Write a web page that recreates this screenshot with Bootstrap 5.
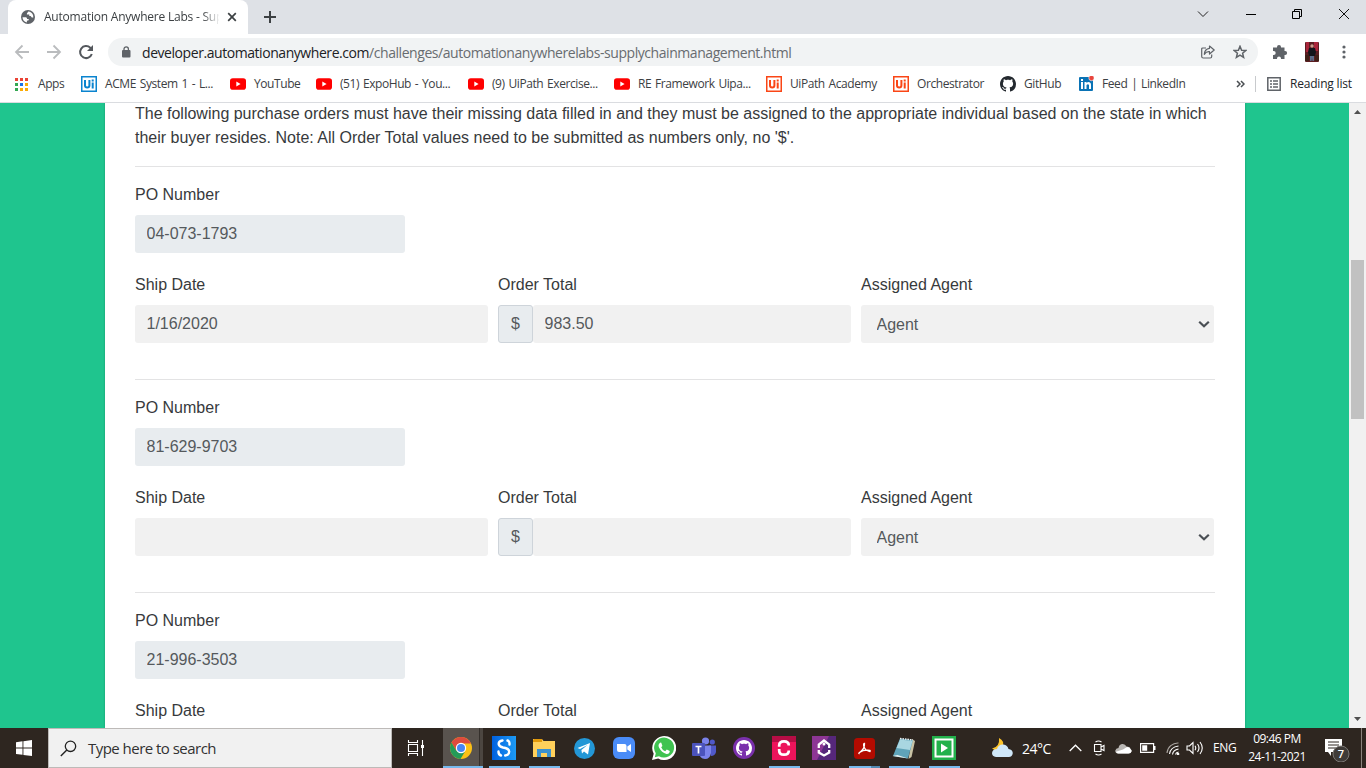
<!DOCTYPE html>
<html lang="en">
<head>
<meta charset="utf-8">
<meta name="viewport" content="width=device-width, initial-scale=1">
<title>Automation Anywhere Labs - Supply Chain Management</title>
<link href="https://cdn.jsdelivr.net/npm/bootstrap@5.3.0/dist/css/bootstrap.min.css" rel="stylesheet">
<style>
  body { width: 1366px; height: 768px; font-family: "Open Sans", "Noto Sans", sans-serif; font-size: 12px; color: #3c4043; }
  svg { display: block; flex: none; }
  .tabstrip { height: 34px; background: #dee1e6; }
  .tab-active { width: 240px; height: 34px; margin-left: 8px; background: #fff; border-radius: 8px 8px 0 0; padding-left: 13px; }
  .tab-title { width: 175px; margin-left: 9px; letter-spacing: -.22px; -webkit-mask-image: linear-gradient(90deg, #000 158px, transparent 176px); }
  .win-buttons { width: 169px; padding: 0 17px 6px 0; }
  .toolbar { height: 36px; background: #fff; }
  .omnibox { width: 1150px; height: 28px; border-radius: 14px; background: #f1f3f4; margin-left: 14px; padding-left: 13px; }
  .url { font-size: 14px; color: #202124; margin-left: 11px; letter-spacing: -.44px; }
  .url span { color: #686c70; }
  .bookmarks { height: 33px; background: #fff; border-bottom: 1px solid #dadce0; padding-left: 14px; padding-bottom: 5px; }
  .bm-list { display: grid; grid-template-columns: 67px 149px 86px 152px 146px 152px 127px 107px 78px 158px; align-items: center; }
  .bm-list > div { display: flex; align-items: center; gap: 8px; white-space: nowrap; height: 16px; line-height: 16px; letter-spacing: -.42px; word-spacing: 1.1px; }
  .page { height: 625px; background: #1fc58e; }
  .sheet { width: 1140px; margin-left: 105px; padding: 0 30px; background: #fff; box-shadow: 0 0 2px rgba(0,0,0,.25); font-family: "Liberation Sans", Arial, sans-serif; font-size: 16px; line-height: 24px; color: #373a3c; }
  .intro { margin: -1px 0 16px; }
  .rule { height: 1px; background: #e3e3e4; margin-bottom: 16px; }
  .order { height: 213px; }
  .order .row { --bs-gutter-x: 10px; width: 1089px; }
  .order label { display: block; margin-bottom: 8px; }
  .order .form-control, .order .form-select, .order .input-group-text { height: 38px; font-size: 16px; line-height: 24px; color: #55595c; border-radius: 3px; padding: 6px 12px; }
  .order .form-control, .order .form-select { border: 0; background-color: #f1f1f1; }
  .order .form-control { padding: 6px 11.500px; }
  .order .form-control.po { width: 270px; background: #e8ecef; margin-bottom: 20px; }
  .order .input-group-text { width: 35px; flex: none; padding: 5px 0; justify-content: center; background: #e8ecef; border: 1px solid #ced4da; }
  .order .form-select { padding: 8px 15px 6px 15.500px; background-image: none; }
  .caret { top: 15px; right: 4px; }
  .scroll-rail { width: 17px; background: #f1f1f1; padding: 6px 0; }
  .scroll-thumb { width: 13px; height: 159px; background: #c1c1c1; margin-bottom: auto; margin-top: 146px; }
  .taskbar { height: 40px; background: #2e2620; color: #fff; }
  .start { width: 48px; }
  .search { width: 344px; height: 40px; background: #f1f1f1; border: 1px solid #bdbab8; color: #323232; font-size: 15px; padding-left: 11px; }
  .search span { margin-left: 11px; letter-spacing: -.53px; }
  .app { width: 40px; height: 40px; display: flex; flex: none; align-items: center; justify-content: center; }
  .open { background: linear-gradient(#76b9ed, #76b9ed) 5px 38px / 31px 2px no-repeat; }
  .stacked { background: linear-gradient(90deg, #76b9ed 22px, #5288b0 22px) 5px 38px / 31px 2px no-repeat; }
  .current { background: linear-gradient(#76b9ed, #76b9ed) 0 38px / 40px 2px no-repeat, linear-gradient(90deg, #59534e 36px, #35302c 36px, #35302c 37px, #4c4641 37px); }
  .tray { display: grid; grid-template-columns: 31px 47px 24px 22px 25px 26px 20px 26px 30px 70px 42px; align-items: center; width: 363px; margin-left: 27px; }
  .clock { line-height: 18px; letter-spacing: -.5px; }
  .desk { border-left: 1px solid #8a837d; width: 5px; height: 40px; margin-left: -8px; }
</style>
</head>
<body class="overflow-hidden">
<svg width="0" height="0" class="position-absolute">
  <defs>
    <symbol id="yt" viewBox="0 0 16 16"><rect y="2.300" width="16" height="11.400" rx="2.800" fill="#f00"/><path d="M6.300 5.500 10.600 8 6.300 10.500z" fill="#fff"/></symbol>
    <symbol id="ui" viewBox="0 0 16 16"><rect width="16" height="16" fill="currentColor"/><path d="M1.500 1.500h13v13h-13z" fill="#fff"/><path d="M4 4v5.500q0 2 2.200 2t2.200-2V4M11.700 6.500V12.500M11.700 3.500v2" fill="none" stroke="currentColor" stroke-width="2"/></symbol>
    <symbol id="gh" viewBox="0 0 16 16"><path d="M8 0C3.580 0 0 3.580 0 8c0 3.540 2.290 6.530 5.470 7.590.4.070.55-.17.55-.38 0-.19-.01-.82-.01-1.490-2.010.37-2.530-.49-2.690-.94-.09-.23-.48-.94-.82-1.130-.28-.15-.68-.52-.01-.53.63-.01 1.080.58 1.230.82.72 1.210 1.870.87 2.330.66.07-.52.28-.87.51-1.070-1.780-.2-3.640-.89-3.640-3.950 0-.87.31-1.590.82-2.150-.08-.2-.36-1.020.08-2.120 0 0 .67-.21 2.200.82.64-.18 1.320-.27 2-.27s1.360.09 2 .27c1.530-1.040 2.200-.82 2.200-.82.44 1.100.16 1.920.08 2.120.51.56.82 1.270.82 2.150 0 3.070-1.870 3.750-3.650 3.950.29.25.54.73.54 1.480 0 1.070-.01 1.930-.01 2.200 0 .21.15.46.55.38A8.010 8.010 0 0 0 16 8c0-4.420-3.580-8-8-8z" fill="currentColor"/></symbol>
    <symbol id="chev" viewBox="0 0 10 7"><path d="M1 1.200 5 5 9 1.200" fill="none" stroke="#4a4f54" stroke-width="1.800"/></symbol>
  </defs>
</svg>

<header>
  <div class="tabstrip d-flex align-items-center">
    <div class="tab-active d-flex align-items-center">
      <svg width="14" height="14" viewBox="0 0 14 14"><circle cx="7" cy="7" r="7" fill="#5f6368"/><path d="M1.500 7.300h3.300q1.400.3 1.300 1.800h1.600v1.200l-1.800.5v1.600q-4.100-.6-4.400-5.100zM7.300 1.600 5.900 3.400v1.200h2.400v1.500h1.300l1.200 1.500 1.500-.2q.2-4-3.500-5.700z" fill="#fff"/></svg>
      <div class="tab-title text-nowrap">Automation Anywhere Labs - Sup</div>
      <svg class="ms-2" width="10" height="10" viewBox="0 0 10 10"><path d="m1.200 1.200 7.600 7.600m0-7.600L1.200 8.800" stroke="#3c4043" stroke-width="1.700"/></svg>
    </div>
    <svg style="margin-left:16px" width="12" height="12" viewBox="0 0 12 12"><path d="M6 0v12M0 6h12" stroke="#3c4043" stroke-width="2"/></svg>
    <div class="win-buttons d-flex align-items-center justify-content-between ms-auto">
      <svg width="12" height="8" viewBox="0 0 12 8"><path d="m1 1.500 5 5 5-5" fill="none" stroke="#222"/></svg>
      <svg width="10" height="10" viewBox="0 0 10 10"><path d="M0 5.500h10" stroke="#000"/></svg>
      <svg width="10" height="10" viewBox="0 0 10 10"><path d="M.5 2.500h7v7h-7zM2.500 2.500v-2h7v7h-2" fill="none" stroke="#000"/></svg>
      <svg width="10" height="10" viewBox="0 0 10 10"><path d="m0 0 10 10m0-10L0 10" stroke="#111"/></svg>
    </div>
  </div>

  <div class="toolbar d-flex align-items-center">
    <svg style="margin-left:14px" width="16" height="16" viewBox="0 0 16 16"><path d="M15 8H2m6.500-6.500L2 8l6.500 6.500" fill="none" stroke="#babcbe" stroke-width="1.800"/></svg>
    <svg class="ms-3" width="16" height="16" viewBox="0 0 16 16"><path d="M1 8h13M7.500 1.500 14 8l-6.500 6.500" fill="none" stroke="#babcbe" stroke-width="1.800"/></svg>
    <svg class="ms-3" width="16" height="16" viewBox="0 0 16 16"><path d="M13.800 10A6 6 0 1 1 12.300 3.800L14 5.500" fill="none" stroke="#54585d" stroke-width="2"/><path d="M15 1v6H9z" fill="#54585d"/></svg>
    <div class="omnibox d-flex align-items-center">
      <svg width="10" height="12" viewBox="0 0 10 12"><rect x="1" y="4" width="8.500" height="7.500" rx="1" fill="#5f6368"/><path d="M3 5V3a2.200 2.200 0 0 1 4.400 0v2" fill="none" stroke="#5f6368" stroke-width="1.300"/></svg>
      <div class="url text-nowrap">developer.automationanywhere.com<span>/challenges/automationanywherelabs-supplychainmanagement.html</span></div>
      <svg class="ms-auto" width="14" height="14" viewBox="0 0 14 14"><path d="M5 3H1.700q-1 0-1 1v7.500q0 1.500 1.500 1.500h7q1.500 0 1.500-1.500V9.500M8.500 1l4.700 4-4.700 4V6.700q-3.200-.4-5.200 2.600.2-5.300 5.200-6z" fill="none" stroke="#5f6368" stroke-width="1.200" stroke-linejoin="round"/></svg>
      <svg style="margin:0 11px 0 18px" width="14" height="14" viewBox="0 0 14 14"><path d="m7 1.300 1.600 3.900 4.200.3-3.200 2.700 1 4.200L7 10.200l-3.600 2.200 1-4.200-3.200-2.700 4.200-.3z" fill="none" stroke="#5f6368" stroke-width="1.500"/></svg>
    </div>
    <svg style="margin-left:14px" width="16" height="16" viewBox="0 0 16 16"><path d="M1 3.500h4V3a2 2 0 0 1 4 0v.5h3.500V7h.6a2 2 0 0 1 0 4h-.6v4H9v-.5a2 2 0 0 0-4 0v.5H1v-4h.7a2 2 0 0 0 0-4H1z" fill="#5f6368"/></svg>
    <svg style="margin-left:17px" width="14" height="20" viewBox="0 0 14 20"><rect width="14" height="20" rx="1" fill="#5b1d21"/><path d="M1 0h3v10H1zm8 0h4v9H9z" fill="#a9253a"/><path d="M0 13h4v6H0zm10 0h4v6h-4z" fill="#402018"/><circle cx="7" cy="4" r="1.700" fill="#c99e8c"/><path d="M4 6h6l1 4-1 4H4l-1-4z" fill="#13151b"/><path d="M5 14h4v5H7.500l-.5-3-.5 3H5z" fill="#5b6c88"/></svg>
    <svg style="margin-left:23px" width="4" height="14" viewBox="0 0 4 14" fill="#5f6368"><circle cx="2" cy="2" r="1.600"/><circle cx="2" cy="7" r="1.600"/><circle cx="2" cy="12" r="1.600"/></svg>
  </div>

  <div class="bookmarks d-flex align-items-center">
    <div class="bm-list">
      <div><svg width="16" height="16" viewBox="0 0 16 16"><path d="M1 2h3v3H1zM6 2h3v3H6zM11 2h3v3h-3z" fill="#ea4335"/><path d="M1 7h3v3H1zM1 12h3v3H1z" fill="#34a853"/><path d="M6 7h3v3H6z" fill="#1a73e8"/><path d="M11 7h3v3h-3zM6 12h3v3H6zM11 12h3v3h-3z" fill="#fbab05"/></svg>Apps</div>
      <div><svg width="16" height="16" color="#0a84cf"><use href="#ui"/></svg>ACME System 1 - L...</div>
      <div><svg width="16" height="16"><use href="#yt"/></svg>YouTube</div>
      <div><svg width="16" height="16"><use href="#yt"/></svg>(51) ExpoHub - You...</div>
      <div><svg width="16" height="16"><use href="#yt"/></svg>(9) UiPath Exercise...</div>
      <div><svg width="16" height="16"><use href="#yt"/></svg>RE Framework Uipa...</div>
      <div><svg width="16" height="16" color="#fa4616"><use href="#ui"/></svg>UiPath Academy</div>
      <div><svg width="16" height="16" color="#fa4616"><use href="#ui"/></svg>Orchestrator</div>
      <div><svg width="16" height="16" color="#24292f"><use href="#gh"/></svg>GitHub</div>
      <div><svg width="16" height="16" viewBox="0 0 16 16"><rect x="1" y="1" width="14" height="14" rx="1" fill="#0a73b5"/><path d="M3 6h2v7H3zM3 3h2v2H3zM6.500 6h2v1q2-2 4 0 .5.500.500 2v4h-2V9q-1-1.500-2.500 0v4h-2z" fill="#fff"/><circle cx="13.500" cy="2" r="2.700" fill="#e8453c" stroke="#fff" stroke-width=".6"/></svg>Feed | LinkedIn</div>
    </div>
    <svg width="9" height="8" viewBox="0 0 9 8"><path d="m1 1 3 3-3 3m4-6 3 3-3 3" fill="none" stroke="#4a4e52" stroke-width="1.500"/></svg>
    <div style="width:1px;height:16px;background:#c8cacd;margin:0 11px 0 10px"></div>
    <svg width="14" height="14" viewBox="0 0 14 14"><path d="M.8.800h12.400v12.400H.800z" fill="none" stroke="#5f6368" stroke-width="1.500"/><path d="M3 4h2m1 0h5M3 7h2m1 0h5M3 10h2m1 0h5" stroke="#5f6368" stroke-width="1.500"/></svg>
    <span class="text-nowrap text-dark" style="margin-left:9px;letter-spacing:-.2px">Reading list</span>
  </div>
</header>

<main class="page d-flex overflow-hidden">
  <div class="sheet">
    <p class="intro">The following purchase orders must have their missing data filled in and they must be assigned to the appropriate individual based on the state in which<br>their buyer resides. Note: All Order Total values need to be submitted as numbers only, no '$'.</p>

    <section class="order">
      <div class="rule"></div>
      <label for="po1">PO Number</label>
      <input id="po1" class="form-control po" value="04-073-1793" readonly>
      <div class="row">
        <div class="col-4"><label for="sd1">Ship Date</label><input id="sd1" class="form-control" value="1/16/2020"></div>
        <div class="col-4"><label for="ot1">Order Total</label><div class="d-flex"><span class="input-group-text">$</span><input id="ot1" class="form-control" value="983.50"></div></div>
        <div class="col-4"><label for="ag1">Assigned Agent</label><div class="position-relative"><select id="ag1" class="form-select"><option>Agent</option></select><svg class="caret position-absolute" width="12" height="9"><use href="#chev"/></svg></div></div>
      </div>
    </section>

    <section class="order">
      <div class="rule"></div>
      <label for="po2">PO Number</label>
      <input id="po2" class="form-control po" value="81-629-9703" readonly>
      <div class="row">
        <div class="col-4"><label for="sd2">Ship Date</label><input id="sd2" class="form-control"></div>
        <div class="col-4"><label for="ot2">Order Total</label><div class="d-flex"><span class="input-group-text">$</span><input id="ot2" class="form-control"></div></div>
        <div class="col-4"><label for="ag2">Assigned Agent</label><div class="position-relative"><select id="ag2" class="form-select"><option>Agent</option></select><svg class="caret position-absolute" width="12" height="9"><use href="#chev"/></svg></div></div>
      </div>
    </section>

    <section class="order">
      <div class="rule"></div>
      <label for="po3">PO Number</label>
      <input id="po3" class="form-control po" value="21-996-3503" readonly>
      <div class="row">
        <div class="col-4"><label>Ship Date</label></div>
        <div class="col-4"><label>Order Total</label></div>
        <div class="col-4"><label>Assigned Agent</label></div>
      </div>
    </section>
  </div>
  <div class="scroll-rail d-flex flex-column align-items-center ms-auto">
    <svg width="7" height="5" viewBox="0 0 7 5"><path d="M0 5 3.500 1 7 5z" fill="#505050"/></svg>
    <div class="scroll-thumb"></div>
    <svg width="7" height="5" viewBox="0 0 7 5"><path d="m0 0 3.500 4L7 0z" fill="#505050"/></svg>
  </div>
</main>

<footer class="taskbar d-flex align-items-center overflow-hidden">
  <div class="start d-flex justify-content-center">
    <svg width="16" height="16" viewBox="0 0 16 16"><path d="m0 2.200 6.500-.9v6.300H0zM7.400 1.200 16 0v7.600H7.400zM0 8.500h6.500v6.300L0 13.900zM7.400 8.500H16V16l-8.600-1.100z" fill="#fff"/></svg>
  </div>
  <div class="search d-flex align-items-center">
    <svg width="17" height="17" viewBox="0 0 17 17"><circle cx="10.500" cy="6.300" r="5.200" fill="none" stroke="#222" stroke-width="1.300"/><path d="M6.800 10 .8 16" stroke="#222" stroke-width="1.400"/></svg>
    <span>Type here to search</span>
  </div>
  <div class="app ms-1"><svg width="18" height="16" viewBox="0 0 18 16"><path d="M1.500 0v2.500h9V0M1.500 16v-2.500h9V16M1.500 4.500h9v7h-9zM15.500 0v16" fill="none" stroke="#fff" stroke-width="1.100"/><path d="M14 5h3v3h-3z" fill="#fff"/></svg></div>
  <div class="app current" style="margin-left:7px;padding-right:4px"><svg width="22" height="22" viewBox="0 0 22 22"><circle cx="11" cy="11" r="11" fill="#fbc116"/><path d="M1.500 5.500a11 11 0 0 1 19 0l.5 1H11L6.500 14z" fill="#dd4b3e"/><path d="M1.500 5.500A11 11 0 0 0 10.500 22L15 14.500l-8.500-.5z" fill="#249b58"/><circle cx="11" cy="11" r="5.200" fill="#fff"/><circle cx="11" cy="11" r="4" fill="#4786f4"/></svg></div>
  <div class="app open" style="margin-left:1px"><svg width="24" height="24" viewBox="0 0 24 24"><defs><linearGradient id="g1"><stop stop-color="#0060df"/><stop offset="1" stop-color="#1d9bf5"/></linearGradient></defs><rect width="24" height="24" fill="url(#g1)"/><path d="M10.500 4.500Q6.500 5 6.700 8q.3 2.300 4.300 3.500 6 1 6.200 4 0 3.500-4 4M15.500 4.500q2 .5 2 2.500v1.500M6.500 15.500q-.2 3 2.500 4" fill="none" stroke="#fff" stroke-width="2.400" stroke-linecap="round"/></svg></div>
  <div class="app open"><svg width="22" height="18" viewBox="0 0 22 18"><path d="M0 0h9l1.500 2H22v16H0z" fill="#ffd05b"/><path d="M1 0h8v3H0V1z" fill="#e39a0b"/><path d="M4 18v-8h14v8h-4v-4H8v4z" fill="#3b91cf"/></svg></div>
  <div class="app"><svg width="21" height="21" viewBox="0 0 21 21"><circle cx="10.500" cy="10.500" r="10.500" fill="#2397d6"/><path d="m3.500 10 12.500-5-2 11.500-4-3-2 2-.6-3.600L13.500 7 6 11z" fill="#fff"/></svg></div>
  <div class="app"><svg width="22" height="22" viewBox="0 0 22 22"><rect width="22" height="22" rx="6" fill="#4a8cf7"/><path d="M4 7h7.500q2 0 2 2v6H6q-2 0-2-2zM14.300 9.500 18 7v8l-3.700-2.500z" fill="#fff"/></svg></div>
  <div class="app"><svg width="24" height="24" viewBox="0 0 24 24"><path d="m0 24 1.700-6.200A12 12 0 1 1 6.200 22.400z" fill="#fff"/><path d="m2.800 21.200 1-4A10 10 0 1 1 7 20.200z" fill="#40c351"/><path d="M8.500 6.500q-3 2-1.500 5 2.500 5 7.500 6.500 3 .3 3.300-3l-3-1.600-1.600 1.800q-3-1.200-4-4L10.400 10 9.300 6.800z" fill="#fff"/></svg></div>
  <div class="app"><svg width="24" height="23" viewBox="0 0 24 23"><circle cx="20.300" cy="5" r="2.600" fill="#5059c9"/><circle cx="13.500" cy="4" r="3.600" fill="#7b83eb"/><path d="M17 8.500h7V15q-1 4-5 4z" fill="#5059c9"/><path d="M7 8.500h12V16q-1 6-6 6-5.500-.5-6-6z" fill="#7b83eb"/><rect y="6" width="13" height="13" rx="1" fill="#4b53bc"/><path d="M3.500 9.500h6M6.500 9.500v7" stroke="#fff" stroke-width="1.700"/></svg></div>
  <div class="app"><svg width="22" height="22" viewBox="0 0 22 22"><circle cx="11" cy="11" r="11" fill="#7a30ac"/><svg x="3" y="3" width="16" height="16" color="#fff"><use href="#gh"/></svg></svg></div>
  <div class="app open"><svg width="24" height="24" viewBox="0 0 24 24"><path d="M0 0h24v24H0z" fill="#ed145b"/><path d="M0 0h24v6H0z" fill="#b70d45"/><path d="M16.800 9.500Q16.800 5.300 12 5.300T7.200 9.500v1.300M7.200 13v1.500Q7.200 18.700 12 18.700t4.800-4.200" fill="none" stroke="#fff" stroke-width="2.700"/></svg></div>
  <div class="app"><svg width="24" height="24" viewBox="0 0 24 24"><path d="M0 0h24v24H0z" fill="#56277b"/><path d="M0 0h17L5 24H0z" fill="#8d3695"/><path d="M6.800 12V8.500L12 4.500l5.200 4V12M6.800 14v2.500l5.200 3 5.200-3V14" fill="none" stroke="#fff" stroke-width="2.300"/><circle cx="12" cy="8" r="1.500" fill="#fff"/></svg></div>
  <div class="app stacked"><svg width="21" height="21" viewBox="0 0 21 21"><rect width="21" height="21" rx="3.500" fill="#b30b00"/><path d="M5 15q6-4 5.500-9.500-1.500 0-.5 3.500 2 4 6 4.500 1-1.500-3-1.300-4 0-7.500 2.300-1 1-.5 1z" fill="none" stroke="#fff" stroke-width="1.300"/></svg></div>
  <div class="app open"><svg width="24" height="22" viewBox="0 0 24 22"><path d="M20 2 23 4l-3.500 16-3 2z" fill="#c8c2a4"/><path d="M8 1.500 21 3 16 21.500 1 19z" fill="#5fa3b8"/><path d="M8 2.500 20.500 4 18 13 4.500 11z" fill="#a9d6e1"/><path d="M8 1.500 21 3" stroke="#eef3f4" stroke-width="1.500" stroke-dasharray="1.500 1"/><path d="m.5 19 5-1L16 21.500z" fill="#e7f0ee"/></svg></div>
  <div class="app open"><svg width="24" height="24" viewBox="0 0 24 24"><path d="M0 0h24v24H0z" fill="#22b14b"/><path d="M3.500 3.500h17v17h-17z" fill="none" stroke="#fff" stroke-width="2"/><path d="M9 7.500 16 12l-7 4.500z" fill="#fff"/></svg></div>

  <div class="tray">
    <svg width="22" height="20" viewBox="0 0 22 20"><path d="M8 0q6 3 3.500 9-4 6-10.500 1.500Q9 9 8 0z" fill="#fbc22a"/><path d="M5 19q-4-.5-4-4 .5-4 5-4 1.500-5 6.500-4.500 4 .5 5 4.500 4 .5 4.300 4-.5 4-4 4z" fill="#cfe7f8"/></svg>
    <span style="font-size:14px;letter-spacing:-.5px">24°C</span>
    <svg width="13" height="8" viewBox="0 0 13 8"><path d="m.7 7 5.800-5.800L12.300 7" fill="none" stroke="#fff" stroke-width="1.300"/></svg>
    <svg width="12" height="16" viewBox="0 0 12 16"><path d="M1.500 4.500h6.500v7H1.500zM8 7l3-1.500v5L8 9M2.500 2q3-2 6 0M2.500 14q3 2 6 0" fill="none" stroke="#fff" stroke-width="1.100"/></svg>
    <svg width="17" height="11" viewBox="0 0 17 11"><path d="M3 10.500Q0 10 .3 7.500.8 5 3.500 5 4 1.500 7 1q3-.5 4.500 2.500Q15 3.500 15.500 6q1.500 1 1 2.500-.5 2-3 2z" fill="#b9b6b3"/><path d="m8 6.500 4-2.500q3 0 3.500 2 1.500 1 1 2.500-.5 2-3 2H3Q1 10 1 8.800z" fill="#fff"/></svg>
    <svg width="16" height="10" viewBox="0 0 16 10"><path d="M.6.600h13v8.800H.600z" fill="none" stroke="#fff" stroke-width="1.200"/><path d="M2.200 2.200h5v5.600h-5zM14 3h1.500v4H14z" fill="#fff"/></svg>
    <svg width="14" height="13" viewBox="0 0 14 13" fill="none" stroke="#fff" stroke-width="1.100"><path d="M1 11A11 11 0 0 1 12.500 1" stroke="#aaa5a0"/><path d="M3.500 12Q4.500 5 12.500 4M6.500 12.500q.5-4.500 6-5.500M9.500 12.500q.3-2 3-2.500"/><circle cx="12" cy="12" r=".8"/></svg>
    <svg width="18" height="14" viewBox="0 0 18 14" fill="none" stroke="#fff" stroke-width="1.100"><path d="M1 5h2.500L7 1.500v11L3.500 9H1z"/><path d="M9 4.800q1.500 2.200 0 4.400M11.500 3q3 4 0 8M14 1q4.500 6 0 12"/></svg>
    <span style="letter-spacing:-.4px;margin-left:1px">ENG</span>
    <div class="clock text-center text-nowrap">09:46 PM<br>24-11-2021</div>
    <svg style="margin:3px 0 0 13px" width="25" height="25" viewBox="0 0 25 25"><path d="M0 2h17v13H6v4l-3-4H0z" fill="#fff"/><path d="M3 5h11M3 8h11M3 11h8" stroke="#2e2620"/><circle cx="16" cy="17" r="8" fill="#3f3b38" stroke="#7b7774"/><text x="16" y="21" text-anchor="middle" font-size="11" font-weight="600" fill="#fff">7</text></svg>
  </div>
  <div class="desk ms-auto"></div>
</footer>
<script src="https://cdn.jsdelivr.net/npm/bootstrap@5.3.0/dist/js/bootstrap.bundle.min.js"></script>
</body>
</html>
